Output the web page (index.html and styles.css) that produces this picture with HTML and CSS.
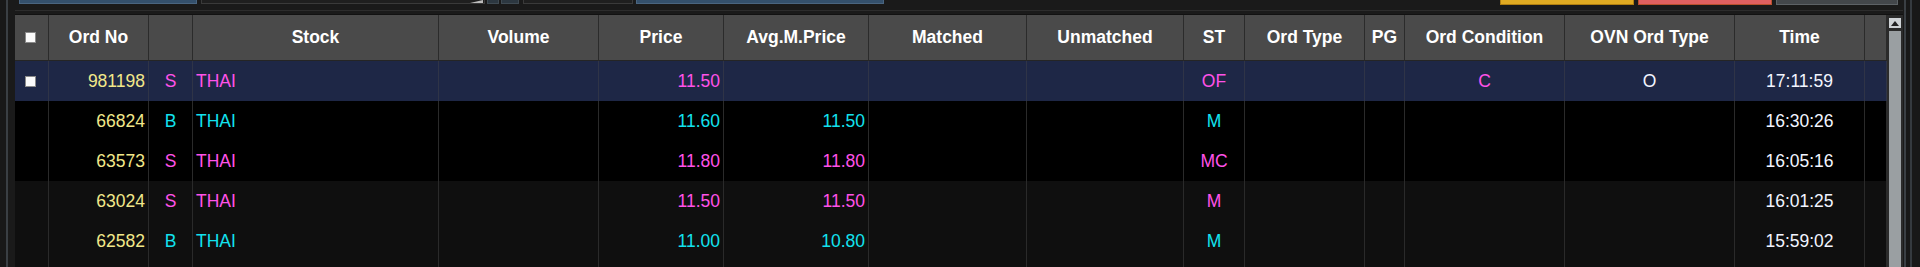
FILE: index.html
```html
<!DOCTYPE html>
<html>
<head>
<meta charset="utf-8">
<link rel="stylesheet" href="styles.css">
</head>
<body>
<div class="frame">
  <div class="panel">
    <div class="toolbar">
      <div class="tb tb-blue tb-a"></div>
      <div class="tb tb-input"><span class="tb-arrow"></span></div>
      <div class="tb tb-mini tb-m1"></div>
      <div class="tb tb-mini tb-m2"></div>
      <div class="tb tb-input tb-c"></div>
      <div class="tb tb-blue tb-d"></div>
      <div class="tb tb-yellow"></div>
      <div class="tb tb-red"></div>
      <div class="tb tb-grey"></div>
    </div>
    <div class="table">
      <div class="cols">
        <div class="row head">
          <div class="c chk-cell"><span class="chk"></span></div>
          <div class="c">Ord No</div>
          <div class="c"></div>
          <div class="c">Stock</div>
          <div class="c">Volume</div>
          <div class="c">Price</div>
          <div class="c">Avg.M.Price</div>
          <div class="c">Matched</div>
          <div class="c">Unmatched</div>
          <div class="c">ST</div>
          <div class="c">Ord Type</div>
          <div class="c">PG</div>
          <div class="c">Ord Condition</div>
          <div class="c">OVN Ord Type</div>
          <div class="c">Time</div>
          <div class="c"></div>
        </div>

        <div class="row sel">
          <div class="c chk-cell"><span class="chk"></span></div>
          <div class="c r ylw">981198</div>
          <div class="c m mag">S</div>
          <div class="c l mag">THAI</div>
          <div class="c r"></div>
          <div class="c r mag">11.50</div>
          <div class="c r"></div>
          <div class="c r"></div>
          <div class="c r"></div>
          <div class="c m mag">OF</div>
          <div class="c m"></div>
          <div class="c m"></div>
          <div class="c m mag">C</div>
          <div class="c m wht">O</div>
          <div class="c m wht">17:11:59</div>
          <div class="c"></div>
        </div>

        <div class="row blk">
          <div class="c chk-cell"></div>
          <div class="c r ylw">66824</div>
          <div class="c m cyn">B</div>
          <div class="c l cyn">THAI</div>
          <div class="c r"></div>
          <div class="c r cyn">11.60</div>
          <div class="c r cyn">11.50</div>
          <div class="c r"></div>
          <div class="c r"></div>
          <div class="c m cyn">M</div>
          <div class="c m"></div>
          <div class="c m"></div>
          <div class="c m"></div>
          <div class="c m"></div>
          <div class="c m wht">16:30:26</div>
          <div class="c"></div>
        </div>

        <div class="row blk">
          <div class="c chk-cell"></div>
          <div class="c r ylw">63573</div>
          <div class="c m mag">S</div>
          <div class="c l mag">THAI</div>
          <div class="c r"></div>
          <div class="c r mag">11.80</div>
          <div class="c r mag">11.80</div>
          <div class="c r"></div>
          <div class="c r"></div>
          <div class="c m mag">MC</div>
          <div class="c m"></div>
          <div class="c m"></div>
          <div class="c m"></div>
          <div class="c m"></div>
          <div class="c m wht">16:05:16</div>
          <div class="c"></div>
        </div>

        <div class="row gry">
          <div class="c chk-cell"></div>
          <div class="c r ylw">63024</div>
          <div class="c m mag">S</div>
          <div class="c l mag">THAI</div>
          <div class="c r"></div>
          <div class="c r mag">11.50</div>
          <div class="c r mag">11.50</div>
          <div class="c r"></div>
          <div class="c r"></div>
          <div class="c m mag">M</div>
          <div class="c m"></div>
          <div class="c m"></div>
          <div class="c m"></div>
          <div class="c m"></div>
          <div class="c m wht">16:01:25</div>
          <div class="c"></div>
        </div>

        <div class="row gry">
          <div class="c chk-cell"></div>
          <div class="c r ylw">62582</div>
          <div class="c m cyn">B</div>
          <div class="c l cyn">THAI</div>
          <div class="c r"></div>
          <div class="c r cyn">11.00</div>
          <div class="c r cyn">10.80</div>
          <div class="c r"></div>
          <div class="c r"></div>
          <div class="c m cyn">M</div>
          <div class="c m"></div>
          <div class="c m"></div>
          <div class="c m"></div>
          <div class="c m"></div>
          <div class="c m wht">15:59:02</div>
          <div class="c"></div>
        </div>

        <div class="row gry">
          <div class="c chk-cell"></div>
          <div class="c"></div><div class="c"></div><div class="c"></div>
          <div class="c"></div><div class="c"></div><div class="c"></div>
          <div class="c"></div><div class="c"></div><div class="c"></div>
          <div class="c"></div><div class="c"></div><div class="c"></div>
          <div class="c"></div><div class="c"></div><div class="c"></div>
        </div>
      </div>
      <div class="scroll">
        <div class="sb-btn"><span class="sb-tri"></span></div>
        <div class="sb-thumb"></div>
      </div>
    </div>
  </div>
  <div class="edge"></div>
</div>
</body>
</html>
```

FILE: styles.css
```css
html, body {
  margin: 0;
  padding: 0;
}
body {
  width: 1920px;
  height: 267px;
  overflow: hidden;
  background: #181818;
  font-family: "Liberation Sans", Arial, sans-serif;
}
.frame {
  display: flex;
  height: 267px;
  padding-left: 6px;
}
.panel {
  width: 1900px;
  box-sizing: border-box;
  border-left: 2px solid #3a3f44;
  border-right: 2px solid #3a3f44;
  padding-left: 7px;
  padding-right: 1px;
  display: flex;
  flex-direction: column;
  background: #1a1a1a;
}
.edge {
  width: 2px;
  margin-left: 4px;
  background: #353a3f;
}

/* toolbar remnants */
.toolbar {
  height: 10px;
  display: flex;
  align-items: flex-start;
  padding-left: 4px;
  padding-right: 5px;
  border-bottom: 1px solid #2c2c2c;
  margin-bottom: 3px;
}
.tb {
  height: 4px;
  box-sizing: border-box;
}
.tb-blue {
  background: #34506c;
  border: 1px solid #4a6580;
  border-top: none;
}
.tb-a { width: 178px; }
.tb-input {
  width: 284px;
  margin-left: 4px;
  background: #1f1f1f;
  border: 1px solid #3a3a3a;
  border-top: none;
  position: relative;
}
.tb-arrow {
  position: absolute;
  right: 1px;
  top: 0;
  width: 0;
  height: 0;
  border-left: 13px solid transparent;
  border-bottom: 3px solid #bdbdbd;
}
.tb-mini {
  margin-left: 2px;
  background: #2c3740;
  border: 1px solid #3f4a52;
  border-top: none;
}
.tb-m1 { width: 12px; }
.tb-m2 { width: 18px; }
.tb-c { width: 110px; margin-left: 4px; }
.tb-d { width: 248px; margin-left: 3px; }
.tb-yellow {
  margin-left: auto;
  width: 134px;
  height: 5px;
  background: #e0aa22;
  border: 1px solid #b07e10;
  border-top: none;
}
.tb-red {
  margin-left: 4px;
  width: 134px;
  height: 5px;
  background: #df6060;
  border: 1px solid #b8502c;
  border-top: none;
}
.tb-grey {
  margin-left: 4px;
  width: 122px;
  height: 5px;
  background: #43474b;
  border: 1px solid #5d6266;
  border-top: none;
}

/* table */
.table {
  display: flex;
  flex: 1;
  border-top: 1px solid #111;
  overflow: hidden;
}
.cols {
  width: 1872px;
  display: flex;
  flex-direction: column;
}
.row {
  display: grid;
  grid-template-columns: 34px 100px 44px 246px 160px 125px 145px 158px 157px 61px 120px 40px 160px 170px 130px 22px;
  height: 40px;
  flex: none;
  font-size: 17.5px;
}
.c {
  box-sizing: border-box;
  border-right: 1px solid #2a2a2a;
  display: flex;
  align-items: center;
  white-space: nowrap;
  overflow: hidden;
}
.c.r { justify-content: flex-end; padding-right: 3px; }
.c.l { justify-content: flex-start; padding-left: 3px; }
.c.m { justify-content: center; }

.head {
  height: 46px;
  background: #4a4a4a;
  color: #fff;
  font-weight: bold;
}
.head .c {
  justify-content: center;
  border-right-color: #2b2b2b;
  border-bottom: 1px solid #252525;
}
.chk-cell {
  justify-content: flex-start !important;
  padding-left: 10px;
}
.chk {
  width: 11px;
  height: 11px;
  box-sizing: border-box;
  background: #fbfbfb;
  border: 1px solid #8a8a8a;
}
.sel { background: #1e2746; }
.sel .c { border-right-color: #2f3447; }
.blk { background: #000; }
.gry { background: #0f0f0f; }

.ylw { color: #f2e88a; }
.mag { color: #ff52e8; }
.cyn { color: #12e2ee; }
.wht { color: #f2f5ff; }

/* scrollbar */
.scroll {
  width: 16px;
  background: #2b2b2b;
  display: flex;
  flex-direction: column;
  align-items: center;
  padding-top: 3px;
  gap: 3px;
}
.sb-btn {
  width: 12px;
  height: 10px;
  background: #cfd3d6;
  display: flex;
  align-items: center;
  justify-content: center;
}
.sb-tri {
  width: 0;
  height: 0;
  border-left: 4px solid transparent;
  border-right: 4px solid transparent;
  border-bottom: 5px solid #222;
}
.sb-thumb {
  width: 12px;
  flex: 1;
  background: #9a9fa2;
}
```
